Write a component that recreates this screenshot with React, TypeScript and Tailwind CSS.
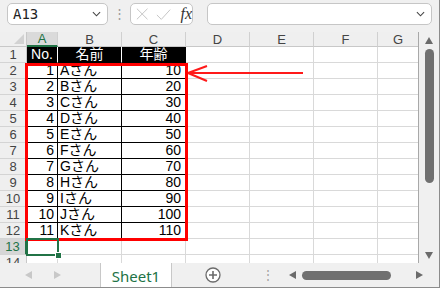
import React from 'react';

const COLS = ['A', 'B', 'C', 'D', 'E', 'F', 'G'];
const WIDTHS = ['w-[31px]', 'w-[64px]', 'w-[64px]', 'w-[64px]', 'w-[64px]', 'w-[64px]', 'w-[41px]'];

const people = [
  { no: 1, name: 'Aさん', age: 10 },
  { no: 2, name: 'Bさん', age: 20 },
  { no: 3, name: 'Cさん', age: 30 },
  { no: 4, name: 'Dさん', age: 40 },
  { no: 5, name: 'Eさん', age: 50 },
  { no: 6, name: 'Fさん', age: 60 },
  { no: 7, name: 'Gさん', age: 70 },
  { no: 8, name: 'Hさん', age: 80 },
  { no: 9, name: 'Iさん', age: 90 },
  { no: 10, name: 'Jさん', age: 100 },
  { no: 11, name: 'Kさん', age: 110 },
];

const cellFont = { fontFamily: '"Liberation Sans", "Noto Sans CJK JP", sans-serif' };

function Tri({ dir, className }: { dir: 'up' | 'down' | 'left' | 'right'; className?: string }) {
  const pts = {
    up: '0,7 4,0 8,7',
    down: '0,0 8,0 4,7',
    left: '7,0 7,8 0,4',
    right: '0,0 0,8 7,4',
  }[dir];
  const vb = dir === 'up' || dir === 'down' ? '0 0 8 7' : '0 0 7 8';
  const size = dir === 'up' || dir === 'down' ? 'w-[8px] h-[7px]' : 'w-[7px] h-[8px]';
  return (
    <svg viewBox={vb} className={`${size} ${className ?? ''}`}>
      <polygon points={pts} fill="currentColor" />
    </svg>
  );
}

function Row({ r }: { r: number }) {
  const selectedRow = r === 13;
  const header = r === 1;
  const data = r >= 2 && r <= 12;
  const p = data ? people[r - 2] : null;
  return (
    <div className="flex h-[16px]">
      <div
        className={`w-[27px] shrink-0 flex items-center justify-center text-[13px] leading-[15px] border-b border-[#d4d4d4] overflow-hidden ${
          selectedRow
            ? 'bg-[#d6d6d6] text-[#217346] border-r-2 border-r-[#217346]'
            : 'bg-[#efefef] text-[#444] border-r border-r-[#c8c8c8]'
        }`}
      >
        {r}
      </div>
      {COLS.map((c, i) => {
        let cls = 'border-r border-b border-[#d9d9d9] bg-white';
        let content: React.ReactNode = null;
        if (header && i < 3) {
          cls = `bg-black text-white justify-center border-b border-b-black ${i < 2 ? 'border-r border-r-white' : 'border-r border-r-black'}`;
          content = ['No.', '名前', '年齢'][i];
        } else if (data && i < 3) {
          cls = `bg-white text-black border-r border-b border-black ${i < 2 ? 'border-r-dotted' : 'border-r-solid'} ${r === 12 ? 'border-b-solid' : 'border-b-dotted'}`;
          if (i === 0) { cls += ' justify-end pr-[3px]'; content = p!.no; }
          if (i === 1) { cls += ' pl-[2px]'; content = p!.name; }
          if (i === 2) { cls += ' justify-end pr-[4px]'; content = p!.age; }
        }
        return (
          <div key={c} className={`${WIDTHS[i]} shrink-0 flex items-center overflow-hidden text-[14px] leading-[15px] ${cls}`} style={cellFont}>
            {content}
          </div>
        );
      })}
    </div>
  );
}

export default function App() {
  return (
    <div
      className="w-[440px] h-[288px] bg-[#f0f0f0] border-r border-b border-[#8c8c8c] flex flex-col overflow-hidden"
      style={cellFont}
    >
      {/* Formula bar */}
      <div className="h-[32px] shrink-0 flex items-start pt-[3px] pl-[7px]">
        <div className="w-[101px] h-[22px] bg-white border border-[#c6c6c6] rounded-[5px] flex items-center justify-between pl-[5px] pr-[6px]">
          <span className="text-[14px] text-[#222] leading-none" style={{ fontFamily: '"DejaVu Sans Mono", monospace' }}>
            A13
          </span>
          <svg viewBox="0 0 10 6" className="w-[9px] h-[6px]">
            <polyline points="1,1 5,5 9,1" fill="none" stroke="#444" strokeWidth="1.2" />
          </svg>
        </div>
        <div className="w-[22px] h-[22px] flex items-center justify-center text-[#9a9a9a] text-[13px]">⋮</div>
        <div className="w-[63px] h-[22px] bg-white border border-[#c6c6c6] rounded-[5px] flex items-center pl-[5px] gap-[8px]">
          <svg viewBox="0 0 14 14" className="w-[14px] h-[14px]">
            <path d="M1 1 L13 13 M13 1 L1 13" stroke="#c4c4c4" strokeWidth="1.1" />
          </svg>
          <svg viewBox="0 0 17 13" className="w-[17px] h-[13px]">
            <path d="M1 7 L6 12 L16 1" fill="none" stroke="#c4c4c4" strokeWidth="1.1" />
          </svg>
          <span className="text-[16px] italic text-[#333] leading-none ml-[1px]" style={{ fontFamily: '"Liberation Serif", serif' }}>
            fx
          </span>
        </div>
        <div className="ml-[14px] w-[225px] h-[22px] bg-white border border-[#c6c6c6] rounded-[5px] flex items-center justify-end pr-[6px]">
          <svg viewBox="0 0 10 6" className="w-[9px] h-[6px]">
            <polyline points="1,1 5,5 9,1" fill="none" stroke="#444" strokeWidth="1.2" />
          </svg>
        </div>
      </div>

      {/* Sheet area */}
      <div className="flex h-[231px] shrink-0">
        <div className="w-[419px] h-[231px] overflow-hidden relative border-r border-[#a8a8a8] bg-white">
          {/* Column headers */}
          <div className="flex h-[15px]">
            <div className="w-[27px] shrink-0 bg-[#efefef] border-r border-b border-[#c8c8c8] flex items-end justify-end">
              <svg viewBox="0 0 10 10" className="w-[10px] h-[10px] mr-[2px] mb-[2px]">
                <polygon points="10,0 10,10 0,10" fill="#d2d2d2" />
              </svg>
            </div>
            {COLS.map((c, i) => (
              <div
                key={c}
                className={`${WIDTHS[i]} shrink-0 flex items-center justify-center overflow-hidden text-[13px] leading-[13px] border-r border-[#d0d0d0] ${
                  i === 0
                    ? 'bg-[#dadada] text-[#217346] border-b-2 border-b-[#217346]'
                    : 'bg-[#efefef] text-[#444] border-b border-b-[#c8c8c8]'
                }`}
              >
                {c}
              </div>
            ))}
          </div>
          {Array.from({ length: 14 }, (_, k) => (
            <Row key={k} r={k + 1} />
          ))}

          {/* Red highlight box */}
          <div className="absolute left-[25px] top-[31px] w-[163px] h-[178px] border-[3px] border-[#ff0000] pointer-events-none" />
          {/* Red arrow */}
          <svg className="absolute left-[186px] top-[32px] w-[120px] h-[20px]" viewBox="0 0 120 20">
            <path d="M2 9 L117 9 M2 9 L21 2 M2 9 L21 17" stroke="#ff1a1a" strokeWidth="2" fill="none" />
          </svg>
          {/* Active cell A13 */}
          <div className="absolute left-[26px] top-[206px] w-[33px] h-[18px] border-2 border-[#217346]">
            <div className="absolute -right-[5px] -bottom-[5px] w-[7px] h-[7px] bg-[#217346] border border-white" />
          </div>
        </div>
        {/* Vertical scrollbar */}
        <div className="w-[20px] flex flex-col items-center text-[#6b6b6b] pt-[5px]">
          <Tri dir="up" />
          <div className="w-[9px] h-[134px] mt-[5px] bg-[#707070] rounded-full" />
          <div className="flex-1" />
          <Tri dir="down" className="mb-[4px]" />
        </div>
      </div>

      {/* Sheet tabs */}
      <div className="flex-1 flex items-stretch">
        <div className="w-[100px] flex items-center text-[#c8c8c8]">
          <Tri dir="left" className="ml-[25px]" />
          <Tri dir="right" className="ml-[22px]" />
        </div>
        <div
          className="w-[72px] bg-white border-x border-[#c8c8c8] flex items-center justify-center pt-[2px] text-[15px] text-[#217346]"
          style={{ fontFamily: '"Noto Sans", sans-serif' }}
        >
          Sheet1
        </div>
        <div className="ml-[33px] flex items-center">
          <svg viewBox="0 0 16 16" className="w-[16px] h-[16px]">
            <circle cx="8" cy="8" r="7" fill="white" stroke="#6b6b6b" strokeWidth="1.3" />
            <path d="M8 4 V12 M4 8 H12" stroke="#6b6b6b" strokeWidth="1.6" />
          </svg>
        </div>
        <div className="ml-[41px] flex items-center text-[#a0a0a0] text-[12px]">⋮</div>
        <div className="ml-[15px] flex items-center text-[#6b6b6b]">
          <Tri dir="left" />
          <div className="ml-[6px] w-[89px] h-[9px] bg-[#707070] rounded-full" />
          <Tri dir="right" className="ml-[25px]" />
        </div>
      </div>
    </div>
  );
}
